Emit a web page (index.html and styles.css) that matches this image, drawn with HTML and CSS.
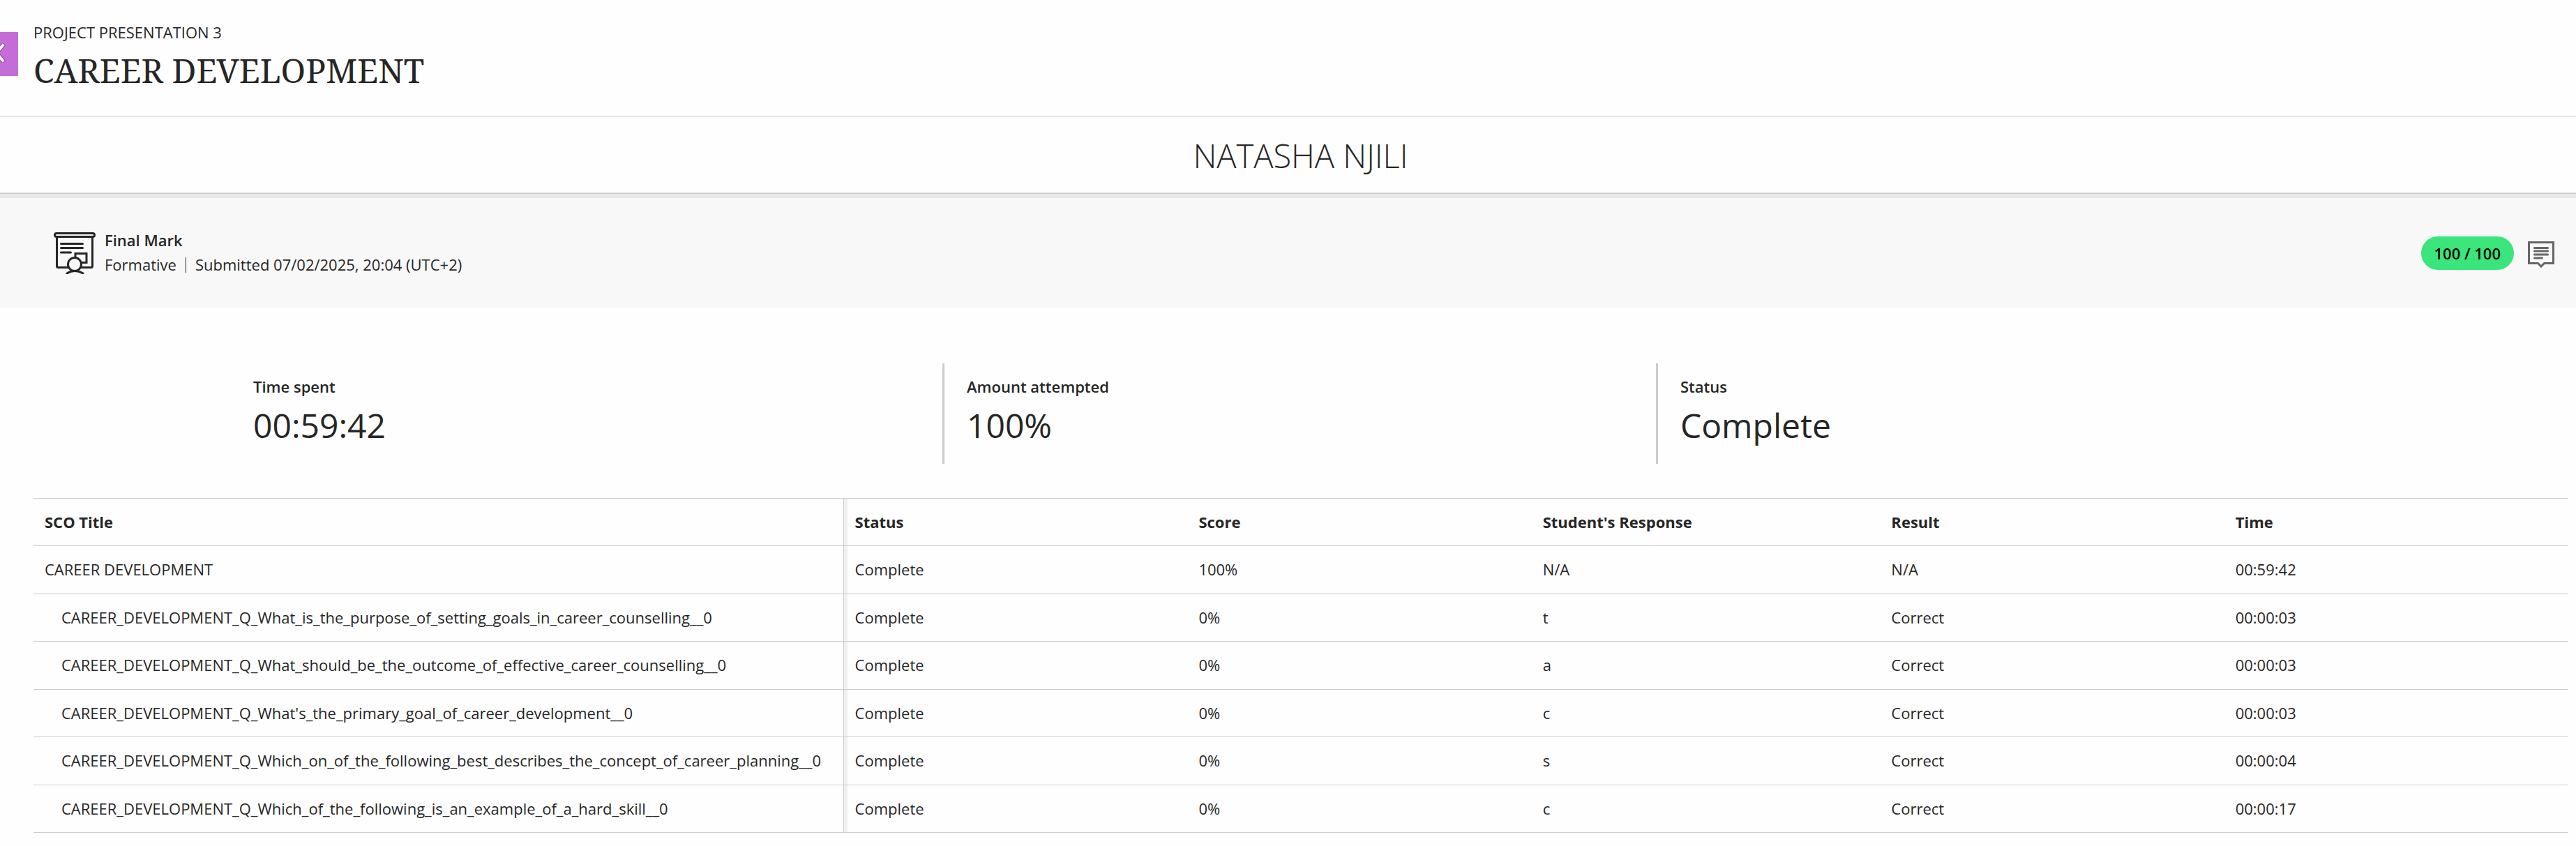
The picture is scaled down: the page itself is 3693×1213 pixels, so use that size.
FILE: index.html
```html
<!DOCTYPE html>
<html lang="en">
<head>
<meta charset="utf-8">
<title>Career Development</title>
<link rel="stylesheet" href="styles.css">
</head>
<body>
<header class="page-header">
  <button class="close-tab" type="button" aria-label="Close">
    <svg class="close-icon" viewBox="0 0 24 28" aria-hidden="true">
      <path class="close-outline" d="M2 3 L20 25 M20 3 L2 25"/>
      <path class="close-stroke" d="M2 3 L20 25 M20 3 L2 25"/>
    </svg>
  </button>
  <p class="course">PROJECT PRESENTATION 3</p>
  <h1 class="title">CAREER DEVELOPMENT</h1>
</header>
<section class="student">
  <h2 class="student-name">NATASHA NJILI</h2>
</section>
<section class="mark-bar">
  <svg class="mark-icon" viewBox="0 0 60 60" aria-hidden="true">
    <rect x="1.500" y="1.500" width="57" height="5" rx="2.500"/>
    <path d="M4.500 7v41.500a2 2 0 0 0 2 2H20M55.500 7v41.500a2 2 0 0 1-2 2H40M10.500 16.500h31M10.500 22.500h31M10.500 29h14"/>
    <path d="M31 36v-5.500h16v13h-7"/>
    <circle cx="30" cy="46" r="9.500"/>
    <path d="M19 59q11-7 23 0"/>
  </svg>
  <div class="mark-text">
    <h3 class="mark-title">Final Mark</h3>
    <p class="mark-meta"><span>Formative</span><span class="divider"></span><span>Submitted 07/02/2025, 20:04 (UTC+2)</span></p>
  </div>
  <span class="score">100 / 100</span>
  <button class="feedback" type="button" aria-label="Feedback">
    <svg class="feedback-icon" viewBox="0 0 38 38" aria-hidden="true">
      <path d="M1.500 1.500h35v30H23.500l-4.500 4.500-4.500-4.500H1.500z"/>
      <path d="M9.500 9.500h19M9.500 14h19M9.500 19h19M9.500 24h11"/>
    </svg>
  </button>
</section>
<main class="report">
  <dl class="stats">
    <div class="stat"><dt>Time spent</dt><dd>00:59:42</dd></div>
    <div class="stat"><dt>Amount attempted</dt><dd>100%</dd></div>
    <div class="stat"><dt>Status</dt><dd>Complete</dd></div>
  </dl>
  <table class="results">
    <colgroup><col class="col-title"><col><col><col class="col-response"><col><col></colgroup>
    <thead>
      <tr><th scope="col">SCO Title</th><th scope="col">Status</th><th scope="col">Score</th><th scope="col">Student's Response</th><th scope="col">Result</th><th scope="col">Time</th></tr>
    </thead>
    <tbody>
      <tr><td>CAREER DEVELOPMENT</td><td>Complete</td><td>100%</td><td>N/A</td><td>N/A</td><td>00:59:42</td></tr>
      <tr class="item"><td>CAREER_DEVELOPMENT_Q_What_is_the_purpose_of_setting_goals_in_career_counselling__0</td><td>Complete</td><td>0%</td><td>t</td><td>Correct</td><td>00:00:03</td></tr>
      <tr class="item"><td>CAREER_DEVELOPMENT_Q_What_should_be_the_outcome_of_effective_career_counselling__0</td><td>Complete</td><td>0%</td><td>a</td><td>Correct</td><td>00:00:03</td></tr>
      <tr class="item"><td>CAREER_DEVELOPMENT_Q_What's_the_primary_goal_of_career_development__0</td><td>Complete</td><td>0%</td><td>c</td><td>Correct</td><td>00:00:03</td></tr>
      <tr class="item"><td>CAREER_DEVELOPMENT_Q_Which_on_of_the_following_best_describes_the_concept_of_career_planning__0</td><td>Complete</td><td>0%</td><td>s</td><td>Correct</td><td>00:00:04</td></tr>
      <tr class="item"><td>CAREER_DEVELOPMENT_Q_Which_of_the_following_is_an_example_of_a_hard_skill__0</td><td>Complete</td><td>0%</td><td>c</td><td>Correct</td><td>00:00:17</td></tr>
    </tbody>
  </table>
</main>
</body>
</html>
```
FILE: styles.css
```css
* {
  box-sizing: border-box;
}

body {
  margin: 0;
  background: #fefefe;
  color: #262626;
  font-family: "Open Sans", "Noto Sans", sans-serif;
  font-size: 22px;
  line-height: 32px;
}

h1, h2, h3, p, dl, dd {
  margin: 0;
  font-weight: 400;
}

/* Page header */
.page-header {
  position: relative;
  padding: 30px 48px 34px;
  border-bottom: 1px solid #ccc;
}

.close-tab {
  position: absolute;
  top: 46px;
  left: 0;
  width: 26px;
  height: 63px;
  padding: 0;
  border: 0;
  background: #c56dd6;
  overflow: hidden;
}

.close-icon {
  position: absolute;
  top: 16px;
  left: -16px;
  width: 24px;
  height: 28px;
  fill: none;
  stroke-linecap: square;
}

.close-outline {
  stroke: #a234b5;
  stroke-width: 6px;
}

.close-stroke {
  stroke: #fff;
  stroke-width: 4px;
}

.title {
  margin-top: 7px;
  font-family: "Noto Serif", "Droid Serif", "Liberation Serif", serif;
  font-size: 48px;
  line-height: 64px;
}

/* Student name */
.student {
  padding: 23px 0 21px 36px;
  border-bottom: 1px solid #ddd;
  text-align: center;
}

.student-name {
  font-size: 47px;
  font-weight: 300;
  line-height: 64px;
}

/* Final mark */
.mark-bar {
  display: flex;
  align-items: center;
  padding: 49px 31px 42px 77px;
  border-top: 1px solid #ccc;
  background: #f8f8f8;
  box-shadow: inset 0 6px #e8e8e8;
}

.mark-icon {
  width: 60px;
  height: 60px;
  fill: none;
  stroke: #262626;
  stroke-width: 3px;
  stroke-linecap: round;
}

.mark-text {
  flex: 1;
  margin-left: 13px;
  padding-bottom: 2px;
}

.mark-title {
  font-size: 22px;
  font-weight: 600;
  line-height: 35px;
}

.mark-meta {
  display: flex;
  align-items: center;
  gap: 13px;
  line-height: 35px;
}

.divider {
  width: 1px;
  height: 22px;
  background: #262626;
}

.score {
  padding: 0 19px;
  border-radius: 24px;
  background: #3ae57b;
  color: #000;
  font-weight: 600;
  line-height: 48px;
}

.feedback {
  display: flex;
  margin: 4px 0 0 20px;
  padding: 0;
  border: 0;
  background: none;
}

.feedback-icon {
  width: 38px;
  height: 38px;
  fill: none;
  stroke: #666;
  stroke-width: 3px;
  stroke-linecap: round;
}

/* Attempt summary */
.report {
  padding: 80px 11px 20px 48px;
}

.stats {
  display: grid;
  grid-template-columns: repeat(3, 1fr);
  margin: 0 285px 49px 280px;
}

.stat {
  padding: 15px 0 17px 32px;
  border-left: 3px solid #ccc;
}

.stat:first-child {
  border-color: transparent;
}

.stat dt {
  font-weight: 600;
  line-height: 36px;
}

.stat dd {
  font-size: 48px;
  line-height: 76px;
}

/* Results table */
.results {
  width: 100%;
  border-collapse: collapse;
  table-layout: fixed;
}

.col-title {
  width: 31.95%;
}

.col-response {
  width: 13.75%;
}

.results th,
.results td {
  height: 68px;
  padding: 0 16px 2px;
  border-top: 1px solid #ccc;
  border-bottom: 1px solid #ccc;
  text-align: left;
  white-space: nowrap;
}

.results tbody tr:nth-child(odd) td {
  height: 69px;
}

.results th {
  font-weight: 700;
}

.results th:first-child,
.results td:first-child {
  border-right: 1px solid #ccc;
}

.results th:nth-child(2),
.results td:nth-child(2) {
  background: linear-gradient(#f0f0f0, #f0f0f0) 0 0 / 5px 100% no-repeat;
}

.results .item td:first-child {
  padding-left: 40px;
}
```
